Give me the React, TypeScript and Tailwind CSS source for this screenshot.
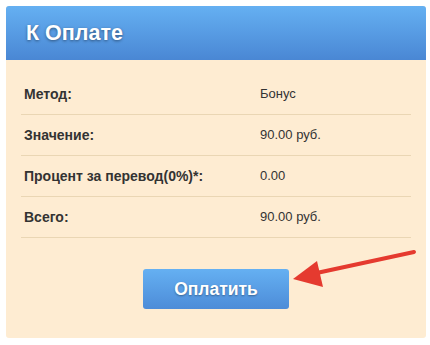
import React from 'react';

type Row = { label: string; value: string };

const rows: Row[] = [
  { label: 'Метод:', value: 'Бонус' },
  { label: 'Значение:', value: '90.00 руб.' },
  { label: 'Процент за перевод(0%)*:', value: '0.00' },
  { label: 'Всего:', value: '90.00 руб.' },
];

function Arrow() {
  return (
    <svg className="absolute left-0 top-0 pointer-events-none" width="430" height="345" viewBox="0 0 430 345">
      <line x1="414" y1="252" x2="312" y2="274" stroke="#e53a2f" strokeWidth="4" strokeLinecap="round" />
      <polygon points="293,279 317,261 323,287" fill="#e53a2f" />
    </svg>
  );
}

export default function App() {
  return (
    <div className="relative w-[430px] h-[345px] bg-white p-[6px] font-['Liberation_Sans',Arial,sans-serif]">
      <div className="w-[420px] h-[332px] rounded-[3px] bg-[#feecd2] overflow-hidden flex flex-col">
        <div className="h-[54px] flex items-center px-5 bg-gradient-to-b from-[#65b0f2] to-[#4a87d4]">
          <h2 className="text-white font-bold text-[21.5px] [text-shadow:0_1px_3px_rgba(0,0,0,0.45)]">К Оплате</h2>
        </div>
        <div className="px-[15px] pt-[14px]">
          {rows.map(row => (
            <div key={row.label} className="h-[41px] flex items-center border-b border-[#ead6b4] text-[#333]">
              <div className="w-[239px] pl-[3px] font-bold text-[14px]">{row.label}</div>
              <div className="text-[13px]">{row.value}</div>
            </div>
          ))}
        </div>
        <div className="flex justify-center pt-[31px]">
          <button className="w-[146px] h-[40px] rounded-[3px] bg-gradient-to-b from-[#65b0f2] to-[#4d8cd8] text-white font-bold text-[17.5px] [text-shadow:0_1px_2px_rgba(0,0,0,0.35)]">
            Оплатить
          </button>
        </div>
      </div>
      <Arrow />
    </div>
  );
}
